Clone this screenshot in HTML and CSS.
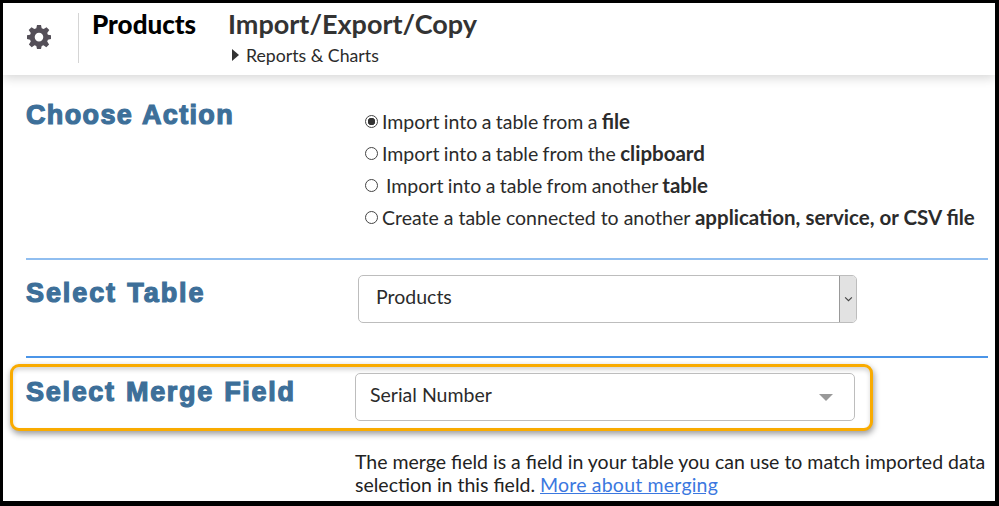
FILE: index.html
```html
<!DOCTYPE html>
<html lang="en">
<head>
<meta charset="utf-8">
<title>Import/Export/Copy</title>
<link rel="stylesheet" href="styles.css">
</head>
<body>
<div class="frame">
  <header class="topbar">
    <div class="gear-cell">
      <svg class="gear" viewBox="0 0 24 24" width="24" height="24"><path fill="#544f58" fill-rule="evenodd" d="M10 0h4l.7 3.200 2 .8L19.500 2.300l2.800 2.800L20.200 8l.7 1.800L24 10.300v3.800l-3.100.7-.7 1.800 1.900 2.800-2.800 2.800-2.800-1.900-1.800.7-.7 3H10l-.7-3-1.800-.7-2.800 1.900-2.800-2.800 1.900-2.800-.7-1.800L0 14.100v-3.800l3.100-.5.700-1.800-2.100-2.900 2.800-2.800L7.300 4l2-.8zM12 7.800a4.300 4.300 0 1 0 0 8.600 4.300 4.300 0 0 0 0-8.600z"/></svg>
    </div>
    <div class="app-name">Products</div>
    <div class="page-title">
      <div class="title">Import/Export/Copy</div>
      <div class="sub"><span class="caret"></span>Reports &amp; Charts</div>
    </div>
  </header>

  <section class="row action-row">
    <h2>Choose Action</h2>
    <div class="options">
      <div class="option import"><span class="radio on"></span>Import into a table from a <b>file</b></div>
      <div class="option import"><span class="radio"></span>Import into a table from the <b>clipboard</b></div>
      <div class="option import"><span class="radio"></span><span class="nudge">Import into a table from another <b>table</b></span></div>
      <div class="option"><span class="radio"></span>Create a table connected to another <b>application, service, or CSV file</b></div>
    </div>
  </section>

  <section class="row table-row">
    <h2>Select Table</h2>
    <div class="select native">
      <span class="value">Products</span>
      <span class="spin"><svg viewBox="0 0 8 5" width="9" height="6"><path d="M1 1l3 3 3-3" fill="none" stroke="#444" stroke-width="1"/></svg></span>
    </div>
  </section>

  <div class="merge-wrap">
    <section class="merge">
      <h2>Select Merge Field</h2>
      <div class="select plain">
        <span class="value">Serial Number</span>
        <span class="tri"></span>
      </div>
    </section>
    <p class="note">The merge field is a field in your table you can use to match imported data<br>selection in this field. <a href="#">More about merging</a></p>
  </div>
</div>
</body>
</html>
```
FILE: styles.css
```css
* { box-sizing: border-box; }
html, body { margin: 0; height: 100%; }
body { background: #000; overflow: hidden; }
.frame {
  width: 992px;
  height: 498px;
  margin: 3px 0 0 3px;
  background: #fff;
  overflow: hidden;
  font-family: Lato, "Liberation Sans", sans-serif;
  font-size: 19.500px;
  color: #2b2b2b;
}
.topbar {
  height: 72px;
  display: flex;
  align-items: flex-start;
  background: #fff;
  box-shadow: 0 3px 10px rgba(0,0,0,.16);
}
.gear-cell {
  width: 76px;
  height: 50px;
  margin-top: 10px;
  padding: 12px 0 0 24px;
  border-right: 1px solid #d5d5d5;
}
.gear { display: block; }
.app-name {
  margin: 6px 0 0 13px;
  width: 136px;
  font-size: 26px;
  line-height: 30px;
  font-weight: 900;
  color: #000;
}
.page-title { margin-top: 6px; }
.title { font-size: 27px; line-height: 30px; font-weight: 700; color: #333; }
.sub { display: flex; align-items: center; margin-top: 5px; font-size: 17.700px; line-height: 24px; color: #2b2b2b; }
.caret {
  width: 0; height: 0;
  margin: 0 7px 3px 4px;
  border-left: 7px solid #333;
  border-top: 6px solid transparent;
  border-bottom: 6px solid transparent;
}
h2 {
  margin: 0;
  width: 332px;
  font-family: "Liberation Sans", Arial, sans-serif;
  font-size: 27px;
  line-height: 30px;
  font-weight: 700;
  letter-spacing: 1.350px;
  word-spacing: 1px;
  color: #3d6f99;
  -webkit-text-stroke: 1.200px #3d6f99;
}
.row { display: flex; margin-left: 23px; width: 962px; }
.action-row { height: 185px; padding-top: 25px; border-bottom: 2px solid #90bef0; }
.options { padding: 5px 0 0 7px; }
.option { display: flex; align-items: center; height: 32px; white-space: pre; }
.option b { font-size: 20.500px; font-weight: 700; }
.import { word-spacing: -.6px; }
.radio {
  width: 13px; height: 13px;
  margin-right: 4px;
  border: 1px solid #444;
  border-radius: 50%;
  background: #fff;
  flex: none;
}
.radio.on { background: radial-gradient(circle, #333 0 3.500px, #fff 4px); }
.nudge { margin-left: 4px; }
.table-row { height: 98px; padding-top: 15px; border-bottom: 2px solid #4b95e8; }
.table-row h2 { margin-top: 3px; letter-spacing: 1.900px; }
.select {
  display: flex;
  align-items: center;
  justify-content: space-between;
  background: #fff;
  border: 1px solid #bdbdbd;
  border-radius: 5px;
}
.value { margin-bottom: 5px; }
.native { width: 499px; height: 48px; padding-left: 17px; }
.spin {
  display: flex; align-items: center; justify-content: center;
  width: 17px; height: 46px;
  background: #e2e2e2;
  border-left: 1px solid #999;
  border-radius: 0 4px 4px 0;
}
.merge-wrap { position: relative; }
.merge {
  display: flex;
  width: 863px;
  height: 67px;
  margin: 6px 0 0 7px;
  padding: 6px 0 0 13px;
  border: 3px solid #f9ab00;
  border-radius: 9px;
  background: #fff;
  box-shadow: 1px 3px 6px rgba(0,0,0,.4), inset 0 3px 4px rgba(0,0,0,.16);
}
.merge h2 { width: 329px; margin-top: 4px; letter-spacing: 1.700px; }
.plain { width: 500px; height: 48px; padding: 0 21px 0 14px; }
.tri {
  width: 0; height: 0;
  border-top: 7px solid #999;
  border-left: 7px solid transparent;
  border-right: 7px solid transparent;
}
.note { margin: 19px 0 0 352px; line-height: 23px; white-space: nowrap; color: #222; }
.note a { color: #3b78e0; letter-spacing: .2px; }
```
